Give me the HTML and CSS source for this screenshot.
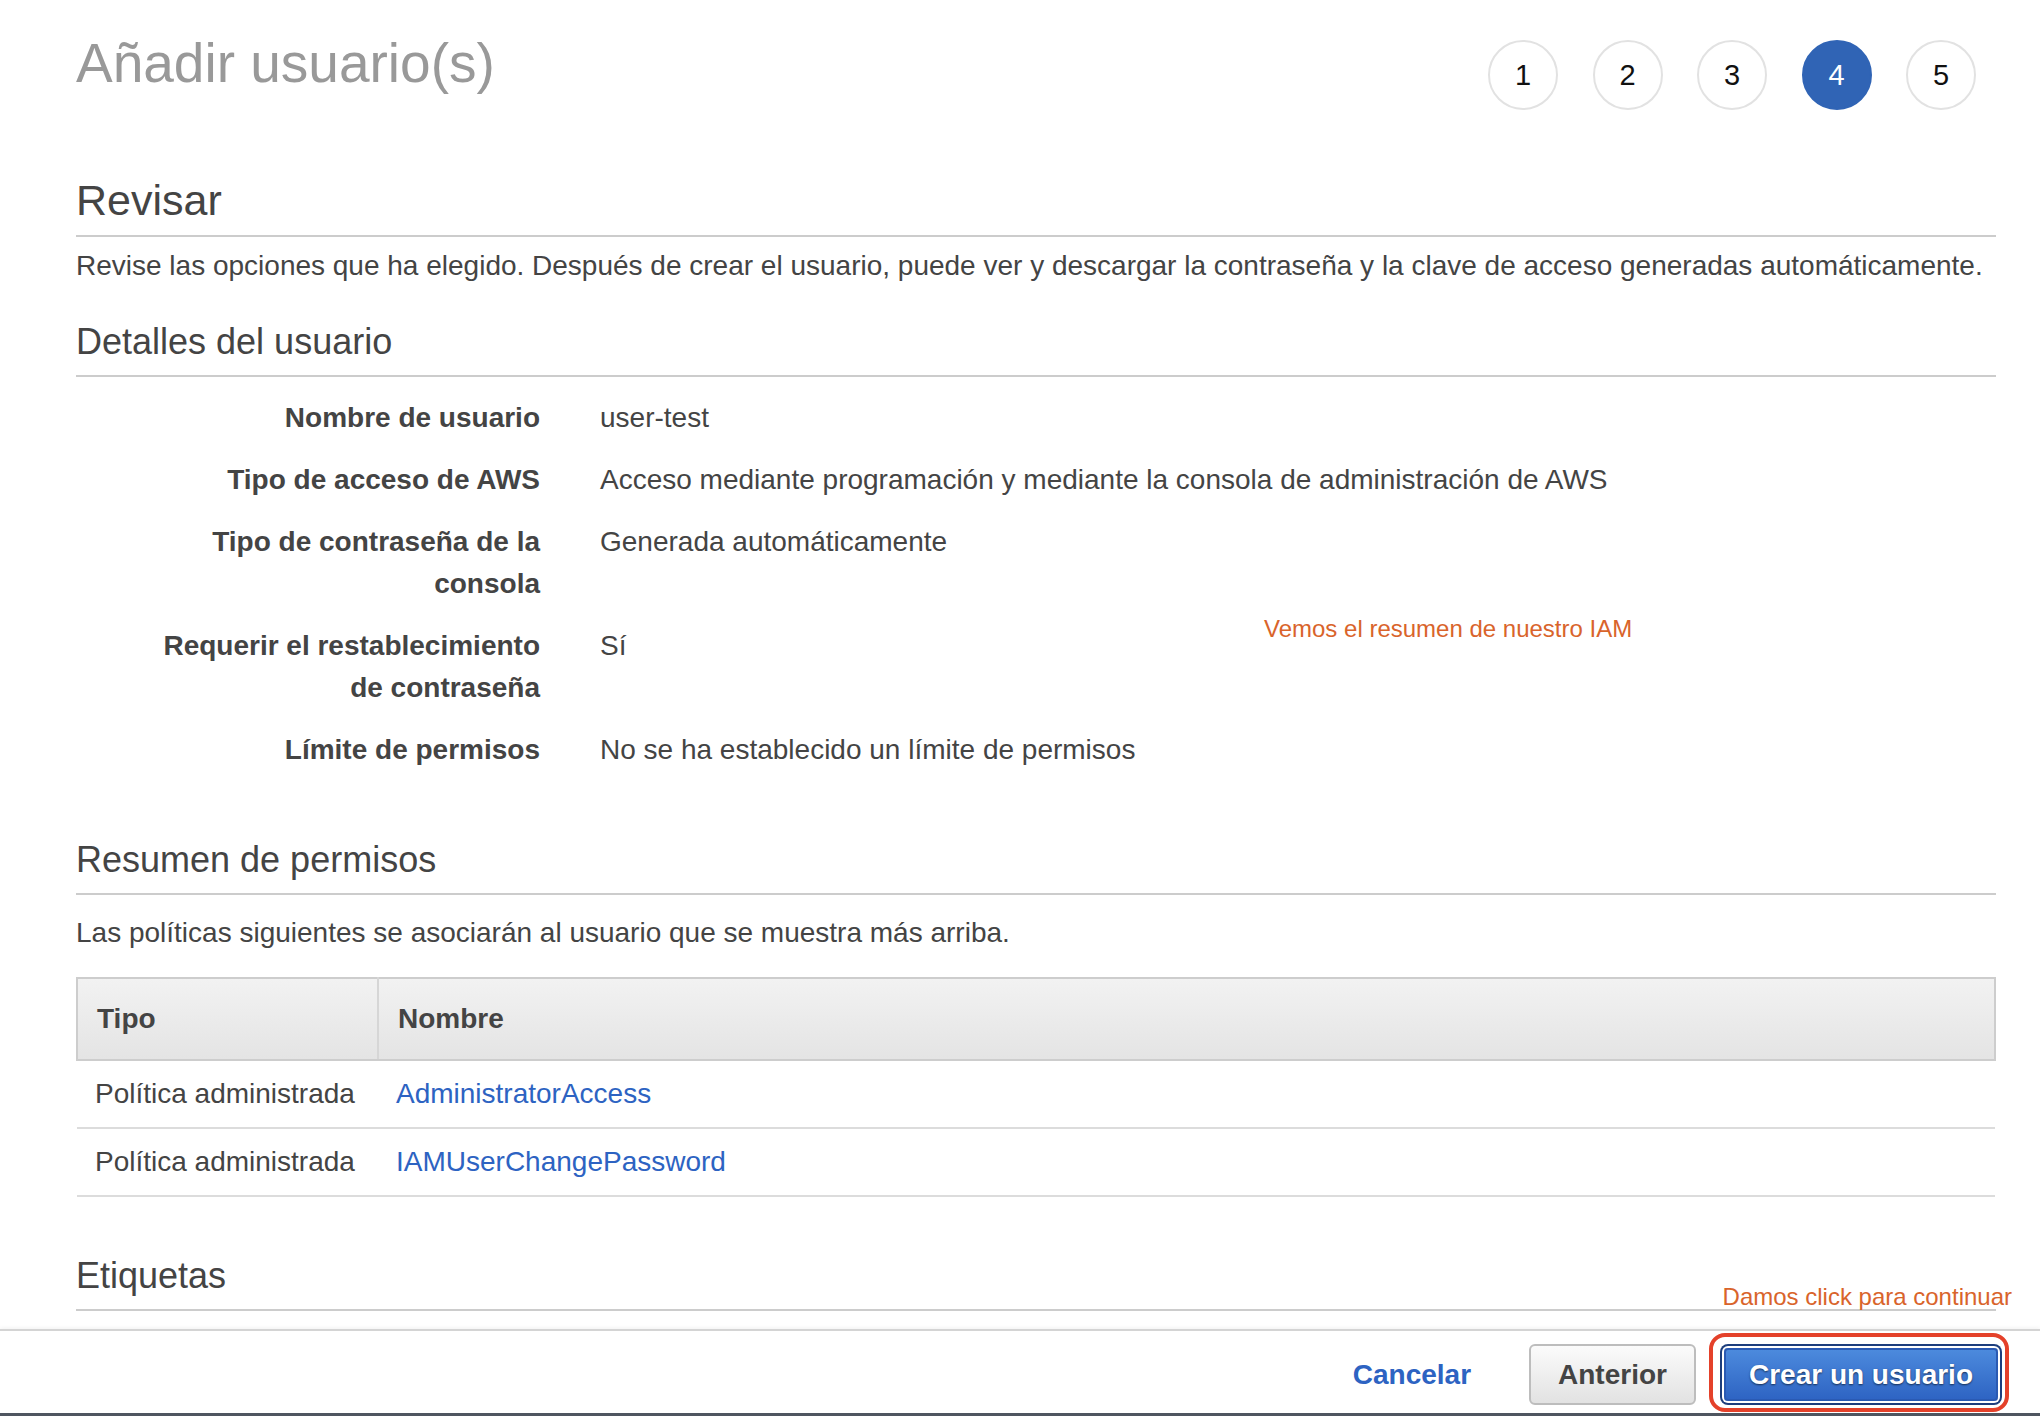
FILE: index.html
```html
<!DOCTYPE html>
<html lang="es">
<head>
<meta charset="utf-8">
<title>Añadir usuario(s)</title>
<link rel="stylesheet" href="styles.css">
</head>
<body>
<div class="app">
  <main class="main">
    <header class="page-head">
      <h1 class="title">Añadir usuario(s)</h1>
      <ol class="steps">
        <li class="step">1</li>
        <li class="step">2</li>
        <li class="step">3</li>
        <li class="step active">4</li>
        <li class="step">5</li>
      </ol>
    </header>

    <section class="review">
      <h2 class="h2">Revisar</h2>
      <p class="intro">Revise las opciones que ha elegido. Después de crear el usuario, puede ver y descargar la contraseña y la clave de acceso generadas automáticamente.</p>

      <h3 class="h3 details-title">Detalles del usuario</h3>
      <dl class="details">
        <dt>Nombre de usuario</dt>
        <dd>user-test</dd>
        <dt>Tipo de acceso de AWS</dt>
        <dd>Acceso mediante programación y mediante la consola de administración de AWS</dd>
        <dt>Tipo de contraseña de la consola</dt>
        <dd>Generada automáticamente</dd>
        <dt>Requerir el restablecimiento de contraseña</dt>
        <dd>Sí</dd>
        <dt>Límite de permisos</dt>
        <dd>No se ha establecido un límite de permisos</dd>
      </dl>

      <h3 class="h3 perm-title">Resumen de permisos</h3>
      <p class="perm-intro">Las políticas siguientes se asociarán al usuario que se muestra más arriba.</p>
      <table class="perm-table">
        <colgroup><col class="col-type"><col></colgroup>
        <thead>
          <tr><th>Tipo</th><th>Nombre</th></tr>
        </thead>
        <tbody>
          <tr><td>Política administrada</td><td><a class="link" href="#">AdministratorAccess</a></td></tr>
          <tr><td>Política administrada</td><td><a class="link" href="#">IAMUserChangePassword</a></td></tr>
        </tbody>
      </table>

      <h3 class="h3 tags-title">Etiquetas</h3>
    </section>
  </main>

  <footer class="footer">
    <button class="btn-link" type="button">Cancelar</button>
    <button class="btn" type="button">Anterior</button>
    <span class="primary-wrap">
      <button class="btn-primary" type="button">Crear un usuario</button>
      <span class="highlight"></span>
    </span>
  </footer>

  <p class="note note-iam">Vemos el resumen de nuestro IAM</p>
  <p class="note note-click">Damos click para continuar</p>
</div>
</body>
</html>
```

FILE: styles.css
```css
html, body {
  margin: 0;
  height: 100%;
}

body {
  font-family: "Liberation Sans", Arial, Helvetica, sans-serif;
  color: #444;
  background: #fff;
}

.app {
  position: relative;
  height: 100vh;
  display: flex;
  flex-direction: column;
  overflow: hidden;
}

.main {
  flex: 1;
  min-height: 0;
  overflow: hidden;
  padding: 0 44px 0 76px;
}

/* Header */
.page-head {
  display: flex;
  justify-content: space-between;
  align-items: flex-start;
}

.title {
  margin: 31px 0 0;
  font-size: 55px;
  line-height: 64px;
  font-weight: normal;
  color: #999;
}

.steps {
  list-style: none;
  margin: 40px 20px 0 0;
  padding: 0;
  display: flex;
  gap: 34.5px;
}

.step {
  width: 70px;
  height: 70px;
  box-sizing: border-box;
  border: 2px solid #e2e2e2;
  border-radius: 50%;
  display: flex;
  align-items: center;
  justify-content: center;
  font-size: 29px;
  color: #111;
}

.step.active {
  background: #3064b5;
  border-color: #3064b5;
  color: #fff;
}

/* Headings */
.h2 {
  margin: 65px 0 0;
  font-size: 43px;
  line-height: 50px;
  font-weight: normal;
  color: #444;
  padding-bottom: 10px;
  border-bottom: 2px solid #ccc;
}

.h3 {
  margin: 0;
  font-size: 36px;
  line-height: 44px;
  font-weight: normal;
  color: #444;
  padding-bottom: 11px;
  border-bottom: 2px solid #ccc;
}

.intro {
  margin: 8px 0 0;
  font-size: 28px;
  line-height: 42px;
}

.details-title {
  margin-top: 33px;
}

/* Details list */
.details {
  display: grid;
  grid-template-columns: 464px 1fr;
  column-gap: 60px;
  row-gap: 20px;
  margin: 20px 0 0;
  font-size: 28px;
  line-height: 42px;
}

.details dt {
  text-align: right;
  font-weight: bold;
  padding-left: 64px;
}

.details dd {
  margin: 0;
}

/* Permissions */
.perm-title {
  margin-top: 67px;
}

.perm-intro {
  margin: 17px 0 0;
  font-size: 28px;
  line-height: 42px;
}

.perm-table {
  margin-top: 23px;
  width: 100%;
  border-collapse: collapse;
  table-layout: fixed;
  font-size: 28px;
  line-height: 42px;
}

.col-type {
  width: 301px;
}

.perm-table th {
  text-align: left;
  font-weight: bold;
  color: #444;
  padding: 19px 19px;
  background: linear-gradient(#f2f2f2, #e4e4e4);
  border: 2px solid #cdcdcd;
}

.perm-table th:first-child {
  border-right-color: #d6d6d6;
}

.perm-table td {
  padding: 12px 18px;
  border-bottom: 2px solid #dcdcdc;
  white-space: nowrap;
}

.link {
  color: #2d63c2;
  text-decoration: none;
}

.tags-title {
  margin-top: 57px;
}

/* Footer */
.footer {
  flex: none;
  height: 87px;
  box-sizing: border-box;
  border-top: 2px solid #d4d4d4;
  border-bottom: 3px solid #4f5660;
  box-shadow: 0 -1px 4px rgba(0, 0, 0, 0.06);
  padding: 13px 42px 0 0;
  display: flex;
  justify-content: flex-end;
  align-items: flex-start;
  background: #fff;
}

.btn-link {
  font-family: "Liberation Sans", Arial, sans-serif;
  font-size: 28px;
  line-height: 42px;
  font-weight: bold;
  color: #2d63c2;
  background: none;
  border: 0;
  padding: 0;
  margin: 10px 58px 0 0;
}

.btn {
  height: 61px;
  box-sizing: border-box;
  padding: 0 27px;
  border: 2px solid #bdbdbd;
  border-radius: 6px;
  background: linear-gradient(#fbfbfb, #e2e2e2);
  font-family: "Liberation Sans", Arial, sans-serif;
  font-size: 28px;
  font-weight: bold;
  color: #444;
  margin-right: 28px;
}

.primary-wrap {
  position: relative;
  display: block;
  margin-top: 4px;
}

.btn-primary {
  display: block;
  height: 53px;
  box-sizing: border-box;
  padding: 0 23px;
  border: 2px solid #2a5ab3;
  border-radius: 4px;
  background: linear-gradient(#4c8add, #2e64c3);
  box-shadow: 0 0 0 2px #fff, 0 0 0 4px #1d3e7d;
  font-family: "Liberation Sans", Arial, sans-serif;
  font-size: 28px;
  font-weight: bold;
  color: #fff;
  text-shadow: 0 1px 2px rgba(0, 0, 0, 0.6);
}

.highlight {
  position: absolute;
  left: -15px;
  right: -11px;
  top: -15px;
  bottom: -11px;
  border: 4px solid #e4412a;
  border-radius: 16px;
  pointer-events: none;
}

/* Annotations */
.note {
  position: absolute;
  margin: 0;
  font-size: 24px;
  line-height: 28px;
  color: #d9642b;
  white-space: nowrap;
}

.note-iam {
  left: 1264px;
  top: 615px;
}

.note-click {
  right: 28px;
  top: 1283px;
}
```
